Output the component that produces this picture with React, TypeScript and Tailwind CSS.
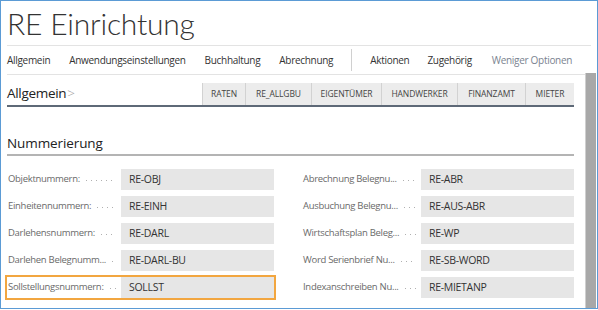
import React from "react";

const font = { fontFamily: '"Open Sans", "Noto Sans", sans-serif' };

const tabs: [string, number][] = [
  ["RATEN", 43],
  ["RE_ALLGBU", 66],
  ["EIGENTÜMER", 70],
  ["HANDWERKER", 76],
  ["FINANZAMT", 68],
  ["MIETER", 49],
];

const left = [
  ["Objektnummern:", "RE-OBJ"],
  ["Einheitennummern:", "RE-EINH"],
  ["Darlehensnummern:", "RE-DARL"],
  ["Darlehen Belegnumm...", "RE-DARL-BU"],
  ["Sollstellungsnummern:", "SOLLST"],
];
const right = [
  ["Abrechnung Belegnu...", "RE-ABR"],
  ["Ausbuchung Belegnu...", "RE-AUS-ABR"],
  ["Wirtschaftsplan Beleg...", "RE-WP"],
  ["Word Serienbrief Nu...", "RE-SB-WORD"],
  ["Indexanschreiben Nu...", "RE-MIETANP"],
];

function Row({ label, value, hl }: { label: string; value: string; hl?: boolean }) {
  return (
    <div className={`flex items-center h-[21px] ${hl ? "ring-2 ring-[#f2a640]" : ""}`}>
      <span className="shrink-0 text-[9.5px] tracking-[-0.3px] text-[#6a6a6a] whitespace-nowrap pl-[1px]">{label}</span>
      <span className="flex-1 min-w-[3px] ml-[6px] mr-[5px] h-px bg-[linear-gradient(to_right,#b0b0b0_1px,transparent_1px)] bg-[length:5px_1px] bg-repeat-x mt-[2px]" />
      <div className="shrink-0 w-[153px] h-[21px] bg-[#e6e6e6] flex items-center pl-[8px] text-[10.5px] tracking-[-0.3px] text-[#333]">
        {value}
      </div>
    </div>
  );
}

export default function App() {
  return (
    <div style={font} className="w-[598px] h-[309px] bg-white border border-[#5b9bd5] overflow-hidden flex flex-col">
      <div className="pl-[6px] pr-[6px]">
        <div className="h-[44px] flex items-center">
          <span
            style={{ fontFamily: 'Lato, "Open Sans", sans-serif' }}
            className="text-[30px] font-light text-[#333] leading-none tracking-[-0.2px] mt-[-1px]"
          >
            RE Einrichtung
          </span>
        </div>
        <div className="h-px bg-[#e3e3e3]" />
        <div className="h-[28px] flex items-center text-[10px] tracking-[-0.3px] text-[#333] whitespace-nowrap">
          <span>Allgemein</span>
          <span className="ml-[19px]">Anwendungseinstellungen</span>
          <span className="ml-[19px]">Buchhaltung</span>
          <span className="ml-[19px]">Abrechnung</span>
          <span className="ml-[18px] w-px h-[22px] bg-[#d0d0d0]" />
          <span className="ml-[18px]">Aktionen</span>
          <span className="ml-[18px]">Zugehörig</span>
          <span className="ml-[20px] text-[#7a8390]">Weniger Optionen</span>
        </div>
        <div className="h-px bg-[#e3e3e3]" />
      </div>
      <div className="flex flex-1 min-h-0">
        <div className="pl-[6px] w-[573px]">
          <div className="flex items-end h-[32px] border-b-2 border-[#5e6977]">
            <span className="text-[13.5px] tracking-[-0.3px] text-[#222] leading-none pb-[5px] flex-1">
              Allgemein<span className="text-[#999] font-light ml-[1px]">&gt;</span>
            </span>
            <div className="flex h-[22px]">
              {tabs.map(([t, w]) => (
                <div
                  key={t}
                  style={{ width: w }}
                  className="bg-[#ececec] border-l border-[#d2d2d2] flex items-center justify-center text-[8.5px] text-[#444] tracking-[-0.1px]"
                >
                  {t}
                </div>
              ))}
            </div>
          </div>
          <div className="h-[49px] flex items-end border-b-2 border-[#b4b4b4]">
            <span className="text-[13.5px] tracking-[-0.1px] text-[#222] leading-none pb-[4px]">Nummerierung</span>
          </div>
          <div className="flex mt-[13px] gap-[28px]">
            <div className="w-[267px] flex flex-col gap-[6px]">
              {left.map(([l, v], i) => (
                <Row key={l} label={l} value={v} hl={i === 4} />
              ))}
            </div>
            <div className="w-[272px] flex flex-col gap-[6px]">
              {right.map(([l, v]) => (
                <Row key={l} label={l} value={v} />
              ))}
            </div>
          </div>
        </div>
        <div className="ml-[11px] mt-[-2px] w-[11px] bg-[#a8a8a8] border-l border-[#cfcfcf]" />
      </div>
    </div>
  );
}
